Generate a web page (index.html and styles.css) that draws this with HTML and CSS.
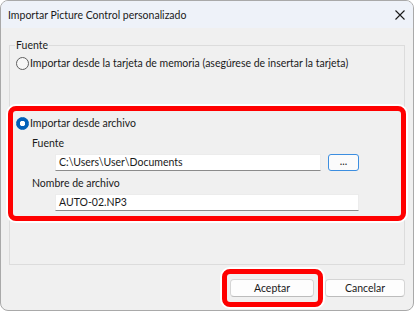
FILE: index.html
```html
<!DOCTYPE html>
<html lang="es">
<head>
    <meta charset="UTF-8">
    <meta name="viewport" content="width=device-width, initial-scale=1.0">
    <title>Importar Picture Control personalizado</title>
    <link rel="stylesheet" href="styles.css">
</head>
<body>
    <div class="window">
        <div class="titlebar">
            <span class="title">Importar Picture Control personalizado</span>
            <svg class="close" width="10" height="10" viewBox="0 0 10 10">
                <path d="M0.5 0.5 L9.5 9.5 M9.5 0.5 L0.5 9.5" stroke="#1a1a1a" stroke-width="1.1" fill="none"/>
            </svg>
        </div>
        <div class="content">
            <fieldset class="group">
                <legend>Fuente</legend>
                <div class="radio-row">
                    <span class="radio"></span>
                    <span>Importar desde la tarjeta de memoria (asegúrese de insertar la tarjeta)</span>
                </div>
                <div class="highlight">
                    <div class="radio-row">
                        <span class="radio checked"></span>
                        <span>Importar desde archivo</span>
                    </div>
                    <div class="field-label">Fuente</div>
                    <div class="path-row">
                        <div class="textbox path">C:\Users\User\Documents</div>
                        <button class="browse">...</button>
                    </div>
                    <div class="field-label">Nombre de archivo</div>
                    <div class="textbox filename">AUTO-02.NP3</div>
                </div>
            </fieldset>
            <div class="buttons">
                <div class="btn-mark">
                    <button class="btn">Aceptar</button>
                </div>
                <button class="btn cancel">Cancelar</button>
            </div>
        </div>
    </div>
</body>
</html>
```

FILE: styles.css
```css
html, body {
    margin: 0;
    padding: 0;
    background: #ffffff;
}
body {
    font-family: Lato, "Noto Sans", sans-serif;
    font-size: 10.5px;
    line-height: 16px;
    color: #1a1a1a;
}
.window {
    width: 414px;
    height: 311px;
    box-sizing: border-box;
    border: 1px solid #a9a9a9;
    border-radius: 8px;
    background: #f0f0f0;
    overflow: hidden;
}
.titlebar {
    height: 27px;
    background: #eef2f9;
    display: flex;
    align-items: center;
    justify-content: space-between;
    padding: 0 8px 0 7px;
}
.content {
    padding: 9px 8px 0 8px;
}
.group {
    margin: 0;
    padding: 0 6px 0 6px;
    border: 1px solid #dcdcdc;
    height: 228px;
    box-sizing: border-box;
}
.group legend {
    padding: 0 1px;
    margin-left: -1px;
    line-height: 16px;
}
.radio-row {
    display: flex;
    align-items: center;
    height: 16px;
}
.group > .radio-row {
    margin-top: 2px;
}
.radio {
    width: 11px;
    height: 11px;
    border: 1px solid #5f5f5f;
    border-radius: 50%;
    background: #f7f7f7;
    margin-right: 1px;
    flex-shrink: 0;
}
.radio.checked {
    border-color: #005fb8;
    background: radial-gradient(circle, #ffffff 0 2.5px, #005fb8 3px);
}
.highlight {
    margin: 35px -8px 0 -8px;
    padding: 4px 0 5px 3px;
    border: 5px solid #ff0000;
    border-radius: 8px;
    box-shadow: 0 0 0 2px #ffffff;
}
.field-label {
    margin: 4px 0 0 16px;
}
.path-row {
    display: flex;
    align-items: center;
    margin: 3px 0 0 39px;
}
.textbox {
    height: 17px;
    box-sizing: border-box;
    background: #ffffff;
    border: 1px solid #ececec;
    border-bottom-color: #8b8b8b;
    padding: 0 3px;
    line-height: 15px;
}
.textbox.path {
    width: 266px;
}
.textbox.filename {
    width: 304px;
    margin: 3px 0 0 39px;
}
.browse {
    width: 31px;
    height: 17px;
    margin-left: 7px;
    padding: 0 0 4px 0;
    border: 1px solid #3c8ee0;
    border-radius: 3px;
    background: #fbfbfb;
    font-family: inherit;
    font-size: 10.5px;
    line-height: 10px;
    color: #1a1a1a;
}
.buttons {
    display: flex;
    justify-content: flex-end;
    align-items: center;
    margin-top: 4px;
}
.btn-mark {
    border: 5px solid #ff0000;
    border-radius: 8px;
    box-shadow: 0 0 0 2px #ffffff;
    padding: 5px 4px 5px 3px;
    margin-right: 2px;
}
.btn {
    display: block;
    width: 84px;
    height: 18px;
    padding: 0;
    border: 1px solid #d5d5d5;
    border-bottom-color: #bcbcbc;
    border-radius: 4px;
    background: #fdfdfd;
    font-family: inherit;
    font-size: 10.5px;
    line-height: 16px;
    color: #1a1a1a;
}
.btn.cancel {
    width: 80px;
}
```
